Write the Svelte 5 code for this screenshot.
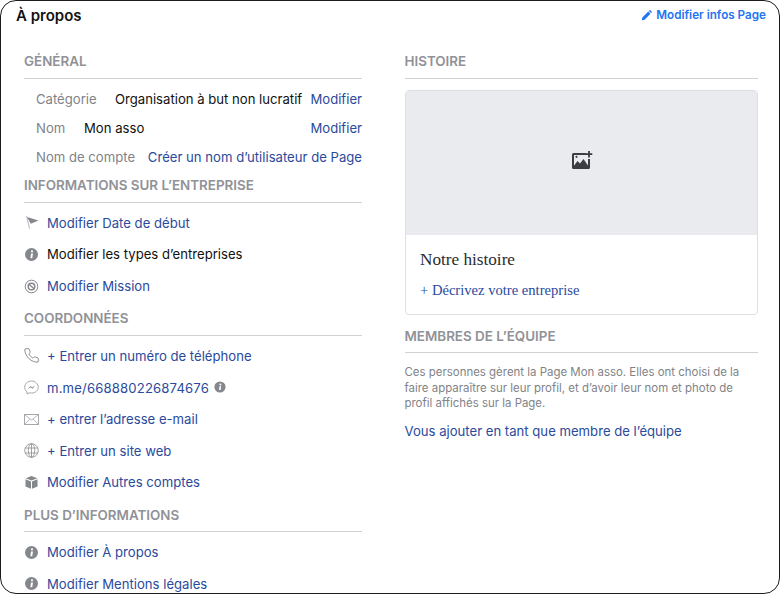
<script>
  const info = 'i';
</script>

{#snippet infoIcon()}
  <svg class="ic" viewBox="0 0 15 15"><circle cx="7.5" cy="7.5" r="6.5" fill="#84878c"/><circle cx="8" cy="4.3" r="1.1" fill="#fff"/><path d="M7 6.6h2L8.2 11.2H6.4z" fill="#fff"/></svg>
{/snippet}

<div class="frame">
  <header class="top">
    <h1>À propos</h1>
    <a class="edit" href="#e">
      <svg viewBox="0 0 12 12" class="pencil"><path d="M0.8 11.2l.7-3.1L7.9 1.7l2.4 2.4-6.4 6.4zM8.6 1l.7-.6c.3-.3.7-.3 1 0l1.3 1.3c.3.3.3.7 0 1l-.6.7z" fill="#2374f2"/></svg>
      Modifier infos Page
    </a>
  </header>

  <div class="cols">
    <section class="left">
      <h2 class="first">GÉNÉRAL</h2>
      <div class="general">
        <div class="g"><span class="lab w1">Catégorie</span><span class="val">Organisation à but non lucratif</span><a href="#m">Modifier</a></div>
        <div class="g"><span class="lab w2">Nom</span><span class="val">Mon asso</span><a href="#m">Modifier</a></div>
        <div class="g"><span class="lab">Nom de compte</span><a href="#m">Créer un nom d’utilisateur de Page</a></div>
      </div>

      <h2>INFORMATIONS SUR L’ENTREPRISE</h2>
      <div class="list">
        <div class="r">
          <svg class="ic" viewBox="0 0 15 15"><path d="M2.6 1l3 12.6" stroke="#b5b7bb" stroke-width="1" fill="none"/><path d="M3 2l11.5 3.5L6.8 8.8z" fill="#84878c"/></svg>
          <a href="#m">Modifier Date de début</a>
        </div>
        <div class="r">{@render infoIcon()}<span class="val">Modifier les types d’entreprises</span></div>
        <div class="r">
          <svg class="ic" viewBox="0 0 15 15"><circle cx="7.5" cy="7.5" r="6.3" fill="none" stroke="#84878c" stroke-width="1"/><circle cx="7.5" cy="7.5" r="3.3" fill="none" stroke="#84878c" stroke-width="1.5"/><path d="M5 5.3l5 4.4" stroke="#84878c" stroke-width="1.4"/></svg>
          <a href="#m">Modifier Mission</a>
        </div>
      </div>

      <h2>COORDONNÉES</h2>
      <div class="list">
        <div class="r">
          <svg class="ic" viewBox="1 1 22 22"><path d="M22 16.92v3a2 2 0 0 1-2.18 2 19.79 19.79 0 0 1-8.63-3.07 19.5 19.5 0 0 1-6-6 19.79 19.79 0 0 1-3.07-8.67A2 2 0 0 1 4.11 2h3a2 2 0 0 1 2 1.72c.127.96.361 1.903.7 2.81a2 2 0 0 1-.45 2.11L8.09 9.91a16 16 0 0 0 6 6l1.27-1.27a2 2 0 0 1 2.11-.45c.907.339 1.85.573 2.81.7A2 2 0 0 1 22 16.92z" fill="none" stroke="#7d8085" stroke-width="1.3"/></svg>
          <a href="#m">+ Entrer un numéro de téléphone</a>
        </div>
        <div class="r">
          <svg class="ic" viewBox="0 0 15 15"><path d="M7.5 1C3.6 1 .7 3.8.7 7.2c0 1.9.9 3.5 2.3 4.6v2.2l2.1-1.2c.7.2 1.5.3 2.4.3 3.9 0 6.8-2.8 6.8-5.9S11.4 1 7.5 1z" fill="none" stroke="#a4a7ab" stroke-width="1"/><path d="M3.8 9l2.8-3 1.5 1.5L11.2 5.5 8.4 8.7 6.8 7.2z" fill="#7d8085"/></svg>
          <a href="#m" class="num">m.me/668880226874676</a>
          <svg class="small" viewBox="0 0 15 15"><circle cx="7.5" cy="7.5" r="7" fill="#84878c"/><circle cx="8" cy="4.3" r="1.2" fill="#fff"/><path d="M6.8 6.6h2.2L8.2 11.4H6.3z" fill="#fff"/></svg>
        </div>
        <div class="r">
          <svg class="ic" viewBox="0 0 15 15"><rect x=".5" y="2.5" width="14" height="10" fill="none" stroke="#a4a7ab"/><path d="M.5 2.5l7 5.5 7-5.5M.5 12.5l5.3-5.5M14.5 12.5L9.2 7" fill="none" stroke="#a4a7ab" stroke-width=".8"/></svg>
          <a href="#m">+ entrer l’adresse e-mail</a>
        </div>
        <div class="r">
          <svg class="ic" viewBox="0 0 15 15"><g fill="none" stroke="#94979b" stroke-width=".9"><circle cx="7.5" cy="7.5" r="6.8"/><ellipse cx="7.5" cy="7.5" rx="3.2" ry="6.8"/><path d="M7.5.7v13.6M1.1 5h12.8M1.1 10h12.8"/></g></svg>
          <a href="#m">+ Entrer un site web</a>
        </div>
        <div class="r">
          <svg class="ic" viewBox="0 0 15 15"><path d="M7.5 1l5.8 2.2-5.800 2.300-5.800-2.300z" fill="#84878c"/><path d="M1.500 4.300l5.500 2.200v7.300L1.500 11.500z" fill="#84878c"/><path d="M13.500 4.300L8 6.500v7.300l5.500-2.300z" fill="#84878c"/></svg>
          <a href="#m">Modifier Autres comptes</a>
        </div>
      </div>

      <h2>PLUS D’INFORMATIONS</h2>
      <div class="list">
        <div class="r">{@render infoIcon()}<a href="#m">Modifier À propos</a></div>
        <div class="r">{@render infoIcon()}<a href="#m">Modifier Mentions légales</a></div>
      </div>
    </section>

    <section class="right">
      <h2 class="first">HISTOIRE</h2>
      <div class="card">
        <div class="cover">
          <svg viewBox="0 0 22 20" class="addimg">
            <path d="M2.500 3h12.500v2H3v11.500h14V9h2v8.500a1.500 1.500 0 0 1-1.500 1.500h-15A1.500 1.500 0 0 1 1 17.500v-13A1.500 1.500 0 0 1 2.500 3z" fill="#3b3d42"/>
            <path d="M2 17l4.500-6 2.500 2.500 3.500-4.500 5.500 8v1.500H2z" fill="#3b3d42"/>
            <circle cx="5.500" cy="6.800" r="1.100" fill="#3b3d42"/>
            <path d="M18 1v6.500M14.800 4.200h6.500" stroke="#3b3d42" stroke-width="1.800"/>
          </svg>
        </div>
        <div class="story">
          <div class="st">Notre histoire</div>
          <a href="#d" class="sl">+ Décrivez votre entreprise</a>
        </div>
      </div>

      <h2 class="team">MEMBRES DE L’ÉQUIPE</h2>
      <p>Ces personnes gèrent la Page Mon asso. Elles ont choisi de la faire apparaître sur leur profil, et d’avoir leur nom et photo de profil affichés sur la Page.</p>
      <a href="#v" class="add">Vous ajouter en tant que membre de l’équipe</a>
    </section>
  </div>
</div>

<style>
  :global(body) { margin: 0; background: #fff; }
  .frame {
    box-sizing: border-box;
    width: 780px;
    height: 594px;
    border: 1.5px solid #1c1c1c;
    border-radius: 16px;
    overflow: hidden;
    background: #fff;
    font-family: Inter, "Liberation Sans", sans-serif;
    font-size: 13.13px;
    color: #1c1e21;
    position: relative;
  }
  .top {
    display: flex;
    justify-content: space-between;
    align-items: center;
    height: 30px;
    padding: 0 13px 0 15px;
  }
  h1 { margin: -2px 0 0; font-size: 15px; font-weight: 600; color: #111; }
  .edit {
    display: flex;
    align-items: center;
    gap: 4px;
    font-size: 11.7px;
    font-weight: 600;
    color: #2374f2;
    margin-top: -2px;
  }
  .pencil { width: 11px; height: 11px; }
  a { color: #2a4a9c; text-decoration: none; }
  .cols {
    display: grid;
    grid-template-columns: 338px 353.5px;
    column-gap: 42.5px;
    padding: 0 0 0 23px;
  }
  h2 {
    margin: 0 0 4.3px;
    padding: 8.5px 0 8.5px;
    line-height: 16px;
    font-size: 13.4px;
    font-weight: 600;
    color: #909297;
    border-bottom: 1px solid #cfd1d5;
  }
  h2.first { margin-top: 13.5px; }
  .general { display: flex; flex-direction: column; gap: 4px; padding: 4px 0 0 12px; margin-bottom: -1px; }
  .g { display: flex; align-items: center; height: 25px; white-space: nowrap; }
  .g a:last-child { margin-left: auto; }
  .lab { color: #7f8388; }
  .w1 { width: 79px; }
  .w2 { width: 48px; }
  .val { color: #111; }
  .list { display: flex; flex-direction: column; }
  .r { display: flex; align-items: center; height: 31.6px; gap: 8px; white-space: nowrap; }
  .ic { width: 15px; height: 15px; flex: none; }
  .num { letter-spacing: .15px; }
  .small { width: 12px; height: 12px; margin-left: -3px; margin-top: -2px; }
  .card {
    box-sizing: border-box;
    height: 225px;
    margin-top: 11.5px;
    border: 1px solid #dddfe2;
    border-radius: 4px;
    overflow: hidden;
  }
  .cover {
    height: 144px;
    background: #e9ebee;
    display: flex;
    align-items: center;
    justify-content: center;
  }
  .addimg { width: 22px; height: 20px; margin-top: -7px; margin-left: 1px; }
  .story { padding: 0 14.5px; font-family: "Liberation Serif", "DejaVu Serif", serif; }
  .st { margin-top: 15px; font-size: 17.2px; line-height: 20px; color: #2a2c30; }
  .sl { display: block; margin-top: 11px; font-size: 14.6px; line-height: 18px; }
  h2.team { margin-top: 4px; }
  p {
    margin: 12px 0 0;
    font-size: 11.45px;
    line-height: 15.7px;
    color: #7f8388;
  }
  .add { display: block; margin-top: 10px; line-height: 18px; }
</style>
